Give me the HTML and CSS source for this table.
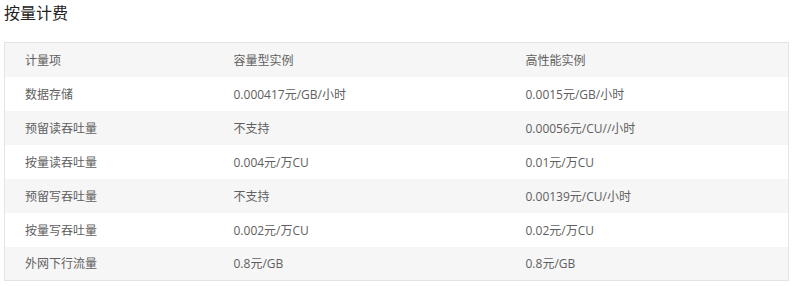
FILE: index.html
```html
<!DOCTYPE html>
<html lang="zh-CN">
<head>
    <meta charset="UTF-8">
    <meta name="viewport" content="width=device-width, initial-scale=1.0">
    <title>按量计费</title>
    <link rel="stylesheet" href="styles.css">
</head>
<body>
    <h3 class="title">按量计费</h3>
    <table class="price-table">
        <tr class="head">
            <td class="col-item">计量项</td>
            <td class="col-cap">容量型实例</td>
            <td>高性能实例</td>
        </tr>
        <tr>
            <td>数据存储</td>
            <td>0.000417元/GB/小时</td>
            <td>0.0015元/GB/小时</td>
        </tr>
        <tr>
            <td>预留读吞吐量</td>
            <td>不支持</td>
            <td>0.00056元/CU//小时</td>
        </tr>
        <tr>
            <td>按量读吞吐量</td>
            <td>0.004元/万CU</td>
            <td>0.01元/万CU</td>
        </tr>
        <tr>
            <td>预留写吞吐量</td>
            <td>不支持</td>
            <td>0.00139元/CU/小时</td>
        </tr>
        <tr>
            <td>按量写吞吐量</td>
            <td>0.002元/万CU</td>
            <td>0.02元/万CU</td>
        </tr>
        <tr>
            <td>外网下行流量</td>
            <td>0.8元/GB</td>
            <td>0.8元/GB</td>
        </tr>
    </table>
</body>
</html>
```

FILE: styles.css
```css
body {
    font-family: "Open Sans", "Noto Sans CJK SC", sans-serif;
    margin: 0;
    padding: 0 11px 0 4px;
    background-color: #ffffff;
    color: #555555;
}
.title {
    margin: 0;
    padding-top: 3px;
    height: 42px;
    box-sizing: border-box;
    font-size: 16px;
    font-weight: normal;
    line-height: 20px;
    color: #222222;
}
.price-table {
    width: 100%;
    border-collapse: collapse;
    border: 1px solid #e4e4e4;
    font-size: 12px;
}
.price-table td {
    height: 34px;
    padding: 0 0 0 20px;
    box-sizing: border-box;
    color: #606060;
}
.price-table tr:nth-child(odd) {
    background-color: #f6f6f6;
}
.price-table tr:nth-child(even) {
    background-color: #ffffff;
}
.col-item {
    width: 209px;
}
.col-cap {
    width: 292px;
}
```
